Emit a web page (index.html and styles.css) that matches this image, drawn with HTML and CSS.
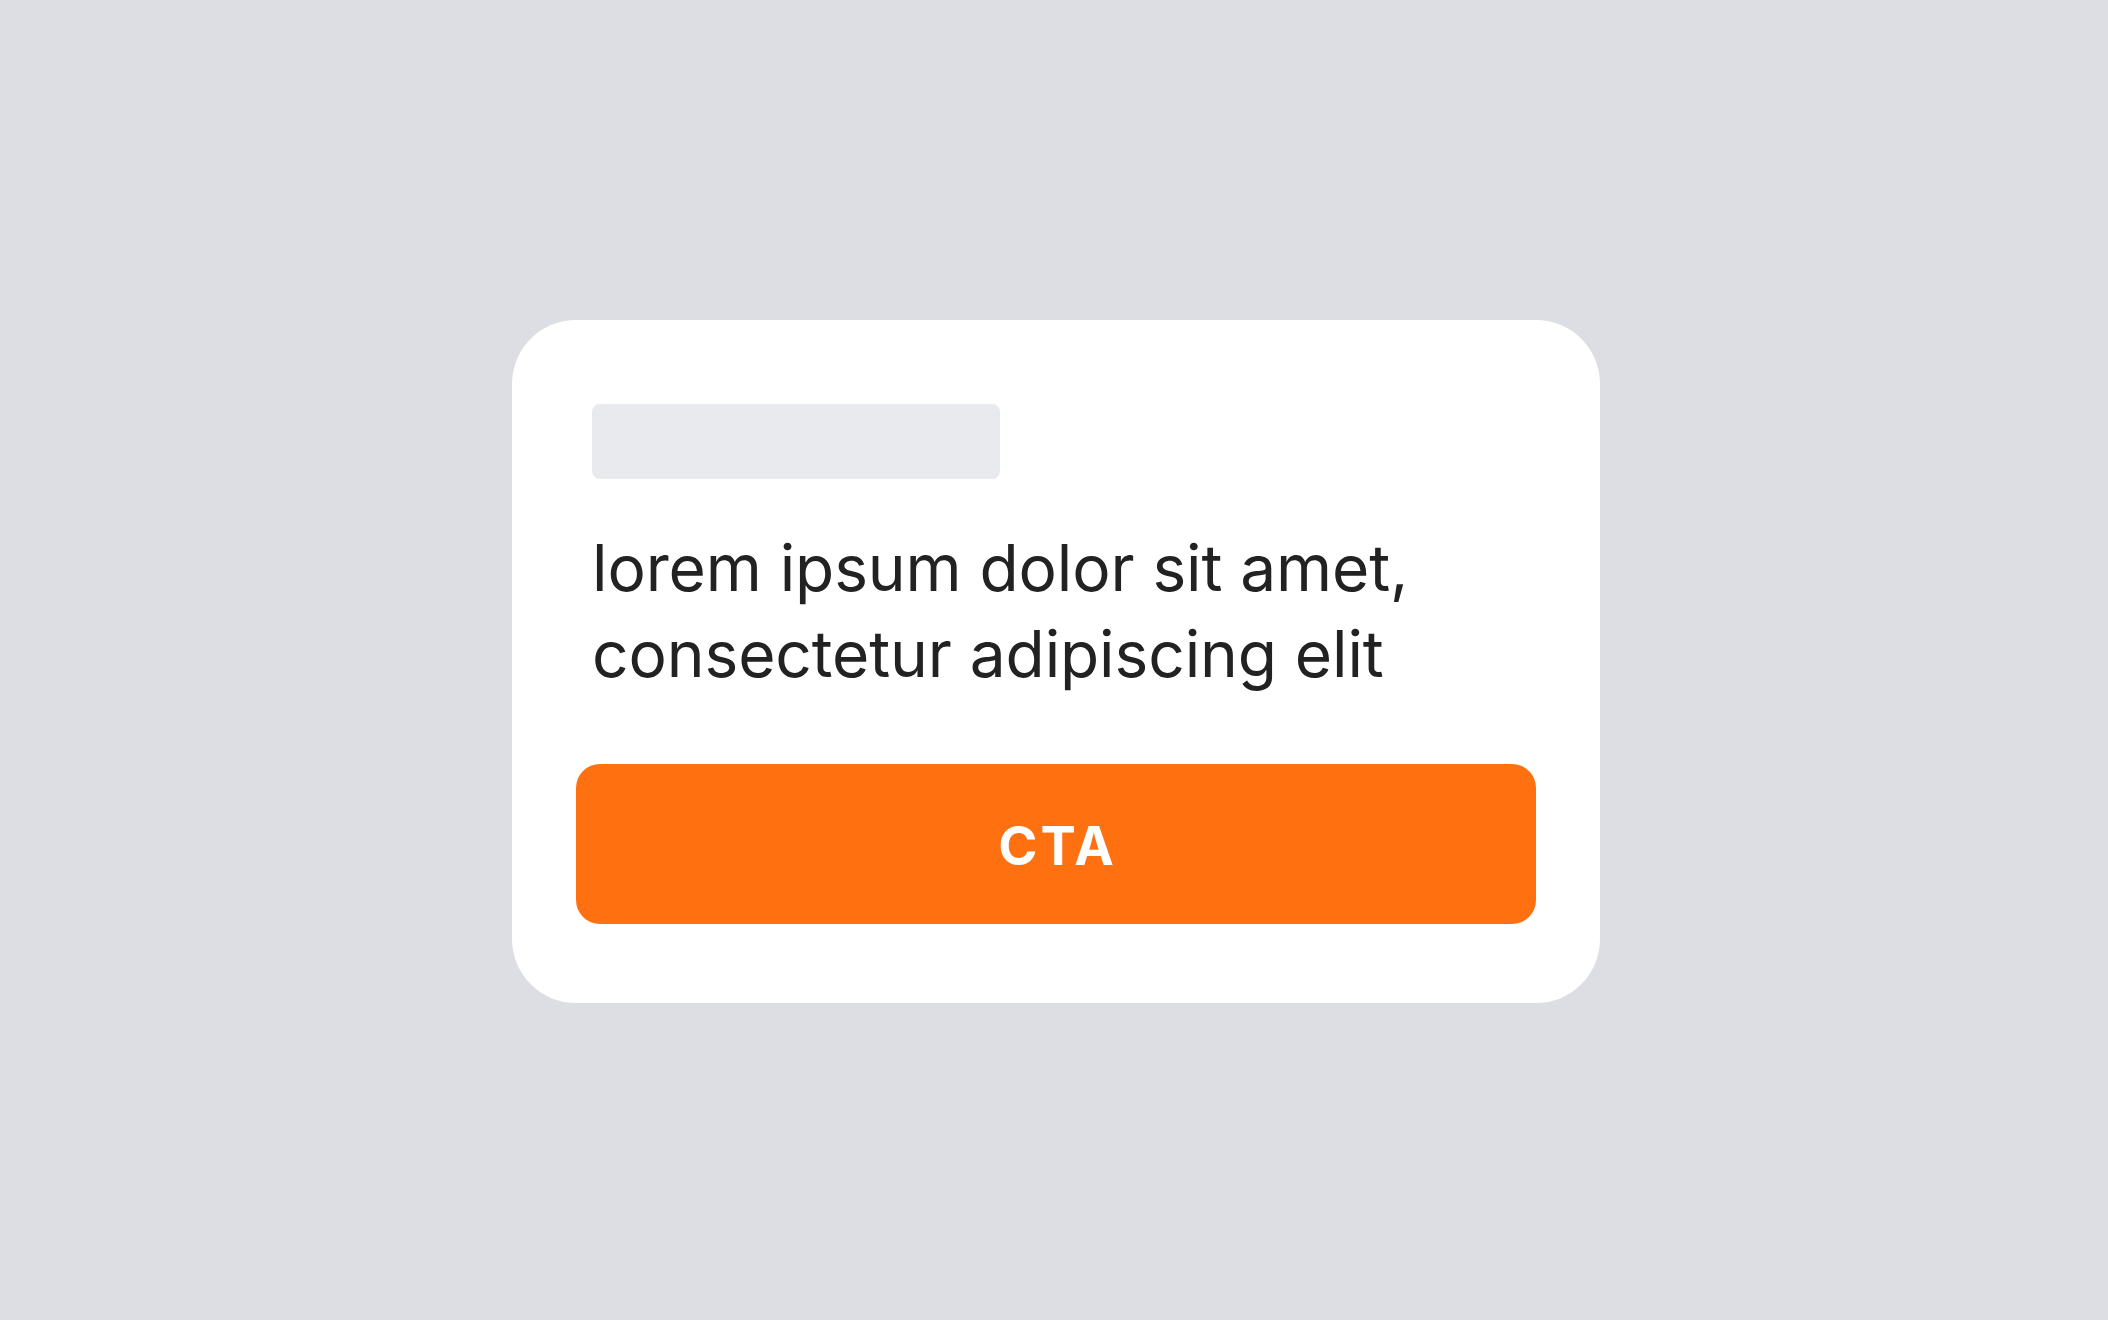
FILE: index.html
```html
<!DOCTYPE html>
<html lang="en">
<head>
<meta charset="utf-8">
<title>Card</title>
<link rel="stylesheet" href="styles.css">
</head>
<body>
<main class="stage">
  <section class="card">
    <div class="content">
      <div class="placeholder"></div>
      <p class="body-text">lorem ipsum dolor sit amet,<br>consectetur adipiscing elit</p>
    </div>
    <button class="cta" type="button">CTA</button>
  </section>
</main>
</body>
</html>
```
FILE: styles.css
```css
html, body {
  margin: 0;
  padding: 0;
  height: 100%;
}
body {
  background: #dddee3;
  font-family: Inter, "Noto Sans", sans-serif;
}
.stage {
  height: 100%;
  display: flex;
  align-items: center;
  justify-content: center;
}
.card {
  box-sizing: border-box;
  width: 1088px;
  height: 683px;
  margin-left: 4px;
  margin-top: 3px;
  background: #ffffff;
  border-radius: 64px;
  padding: 84px 64px 79px 64px;
  display: flex;
  flex-direction: column;
}
.content {
  padding: 0 16px;
}
.placeholder {
  width: 408px;
  height: 75px;
  background: #e9eaee;
  border-radius: 8px;
}
.body-text {
  margin: 46px 0 0 0;
  font-size: 64px;
  line-height: 86px;
  color: #222222;
  font-weight: 400;
  letter-spacing: -0.1px;
}
.cta {
  margin-top: auto;
  height: 160px;
  width: 100%;
  border: none;
  border-radius: 24px;
  background: #ff7011;
  color: #ffffff;
  font-family: Inter, "Noto Sans", sans-serif;
  font-weight: 700;
  font-size: 53px;
  letter-spacing: 3px;
  padding: 4px 0 0 3px;
}
```
